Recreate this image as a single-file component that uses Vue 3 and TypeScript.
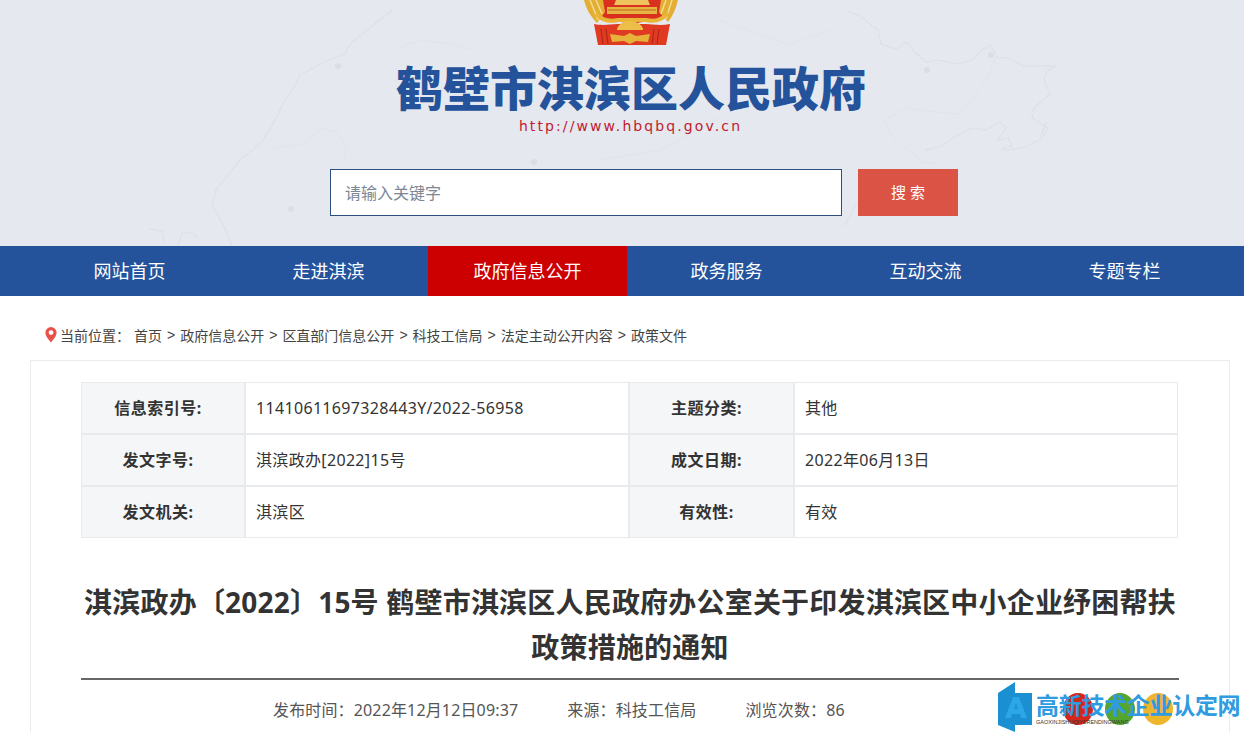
<script setup lang="ts">
const navItems = ['网站首页', '走进淇滨', '政府信息公开', '政务服务', '互动交流', '专题专栏']
const crumbs = ['首页', '政府信息公开', '区直部门信息公开', '科技工信局', '法定主动公开内容', '政策文件']
const infoRows = [
  ['信息索引号:', '11410611697328443Y/2022-56958', '主题分类:', '其他'],
  ['发文字号:', '淇滨政办[2022]15号', '成文日期:', '2022年06月13日'],
  ['发文机关:', '淇滨区', '有效性:', '有效'],
]
// faint province outline behind the header
const mapLines = [
  'M392 10L372 26L350 44L345 54L328 60L300 75L296 84L285 100L272 126L262 142L240 160L216 190L212 205L222 222L232 245',
  'M150 229L162 231L164 242M178 245L182 234L190 232L198 238',
  'M848 11L860 16L878 30L881 44L896 49L906 42L915 52L926 62L938 60L958 64L972 60L982 50L990 45L998 58L1010 58L1022 66L1040 66L1056 66L1046 72L1044 80L1050 94L1034 108L1032 118L1048 128L1044 136',
  'M926 150L942 146L956 136L972 128L986 130L1000 122L1006 128L998 140L1008 138L1012 146L1002 148L1004 150L1022 148L1040 140L1046 122',
  'M845 225L856 204L870 196',
]
const faintLines = [
  'M272 148L302 144L322 128L336 132L346 146L344 160',
  'M884 120L906 108L936 112L960 114L976 94L988 76L996 56',
  'M884 120L894 140L914 154L922 162L938 164',
  'M398 48L420 40L450 44L476 50',
  'M600 160L660 150L720 118',
  'M720 20L790 45L830 30',
]
</script>

<template>
  <div class="page">
    <header class="head">
      <svg class="map" viewBox="0 0 1244 246" width="1244" height="246" aria-hidden="true">
        <g fill="none" stroke="#dce0e8" stroke-width="1.300" stroke-linecap="round" stroke-linejoin="round" stroke-dasharray="8 2 3 2">
          <path v-for="(d, i) in mapLines" :key="i" :d="d" />
        </g>
        <g fill="none" stroke="#e1e4eb" stroke-width="1">
          <path v-for="(d, i) in faintLines" :key="i" :d="d" />
        </g>
        <g fill="#dbdee7">
          <circle cx="338" cy="66" r="3" />
          <circle cx="291" cy="209" r="3" />
          <circle cx="927" cy="70" r="3" />
          <circle cx="991" cy="55" r="3" />
          <circle cx="534" cy="162" r="3" />
        </g>
      </svg>
      <svg class="emblem" viewBox="0 0 120 47" width="120" height="47" aria-hidden="true">
        <path d="M30 0H94V18L62 24L30 18Z" fill="#d9301f" />
        <path d="M14 0H33L35 12L27 23C20 16 16 8 14 0Z" fill="#e3ae33" />
        <path d="M108 0H91L89 12L98 22C103 16 106 8 108 0Z" fill="#e3ae33" />
        <path d="M20 0L28 20M26 0L32 14M102 0L96 19M96 0L91 14" stroke="#f4dc8e" stroke-width="1.500" />
        <path d="M46 0H78L80 5H44Z" fill="#eec35c" />
        <path d="M37 7H87V14H37Z" fill="#e6b440" />
        <path d="M38 10H86" stroke="#bf6a24" stroke-width="1" />
        <path d="M26 14C32 20 40 22 48 20H76C84 22 92 20 98 13" fill="none" stroke="#e8b537" stroke-width="4" />
        <path d="M24 24L28 45H96L100 24C90 26 82 24 76 24H48C40 24 34 26 24 24Z" fill="#e03a22" />
        <path d="M31 29L33 44M36 29L38 44M84 29L82 44M89 29L87 44" stroke="#aa2415" stroke-width="1" />
        <path d="M47 30A13 9 0 0 1 73 30Z" fill="#eebf48" />
        <path d="M40 34L54 36L60 33L66 36L80 34L78 42L66 41L60 44L54 41L42 42Z" fill="#e6b23a" />
      </svg>
      <h1 class="site-name">鹤壁市淇滨区人民政府</h1>
      <div class="site-url">http://www.hbqbq.gov.cn</div>
      <form class="search" @submit.prevent>
        <input class="search-input" type="text" placeholder="请输入关键字" />
        <button class="search-btn" type="submit">搜 索</button>
      </form>
    </header>

    <nav class="nav">
      <a v-for="item in navItems" :key="item" class="nav-item" :class="{ active: item === '政府信息公开' }">{{ item }}</a>
    </nav>

    <div class="crumbs">
      <svg class="pin" viewBox="0 0 12 16" width="12" height="16" aria-hidden="true">
        <path fill-rule="evenodd" fill="#e8524a" d="M6 0a5.600 5.600 0 0 1 5.600 5.600C11.600 9.400 8 13 6 15.500 4 13 .4 9.400 .4 5.600A5.600 5.600 0 0 1 6 0zm0 3.200a2.400 2.400 0 1 0 0 4.800 2.400 2.400 0 0 0 0-4.800z" />
      </svg>
      <span class="crumb-label">当前位置：</span>
      <template v-for="(c, i) in crumbs" :key="c">
        <span v-if="i > 0" class="crumb-sep">&gt;</span>
        <a class="crumb">{{ c }}</a>
      </template>
    </div>

    <main class="card">
      <div class="info">
        <template v-for="row in infoRows" :key="row[0]">
          <div class="info-label">{{ row[0] }}</div>
          <div class="info-value">{{ row[1] }}</div>
          <div class="info-label">{{ row[2] }}</div>
          <div class="info-value">{{ row[3] }}</div>
        </template>
      </div>
      <h2 class="title">淇滨政办〔2022〕15号 鹤壁市淇滨区人民政府办公室关于印发淇滨区中小企业纾困帮扶政策措施的通知</h2>
      <div class="meta">
        <span>发布时间：2022年12月12日09:37</span>
        <span>来源：科技工信局</span>
        <span>浏览次数：86</span>
      </div>
    </main>

    <div class="mark" aria-hidden="true">
      <span class="dot dot-red"></span>
      <span class="dot dot-green"></span>
      <span class="dot dot-yellow"></span>
      <svg class="mark-logo" viewBox="0 0 34 50" width="34" height="50">
        <path d="M0 11L17 0v11h17v32H17v7L0 43z" fill="#1a8fd1" />
        <path d="M7 36L15 15h6l8 21h-6l-1-4h-8l-1 4zM16 27h4l-2-6z" fill="#2ba6e6" fill-rule="evenodd" />
      </svg>
      <div class="mark-text">
        <div class="mark-cn">高新技术企业认定网</div>
        <div class="mark-en">GAOXINJISHUQIYERENDINGWANG</div>
      </div>
    </div>
  </div>
</template>

<style scoped>
.page {
  position: relative;
  width: 1244px;
  height: 732px;
  overflow: hidden;
  background: #fff;
  font-family: "Noto Sans", "Noto Sans CJK SC", sans-serif;
  color: #333;
}

.head {
  position: relative;
  height: 246px;
  background: #e5e8ee;
  display: flex;
  flex-direction: column;
  align-items: center;
}

.map {
  position: absolute;
  left: 0;
  top: 0;
}

.emblem {
  position: relative;
  margin-left: 16px;
  display: block;
}

.site-name {
  position: relative;
  margin: 15px 0 0 18px;
  font-size: 47px;
  line-height: 52px;
  font-weight: 900;
  color: #24539b;
  white-space: nowrap;
}

.site-url {
  position: relative;
  margin: 4px 0 0 17px;
  font-family: "DejaVu Sans", sans-serif;
  font-size: 14px;
  line-height: 16px;
  letter-spacing: 2.1px;
  color: #c0202e;
}

.search {
  position: relative;
  display: flex;
  gap: 16px;
  margin-top: 35px;
  margin-left: 44px;
}

.search-input {
  box-sizing: border-box;
  width: 512px;
  height: 47px;
  padding: 0 14px;
  border: 1px solid #2c4f80;
  background: #fff;
  font: inherit;
  font-size: 16px;
  color: #333;
  outline: none;
}

.search-input::placeholder {
  color: #7b8794;
  opacity: 1;
}

.search-btn {
  width: 100px;
  height: 47px;
  padding: 0 0 2px;
  border: 0;
  background: #db5344;
  color: #fff;
  font: inherit;
  font-size: 15px;
}

.nav {
  display: flex;
  height: 50px;
  padding-left: 30px;
  background: #24539b;
}

.nav-item {
  width: 199px;
  line-height: 50px;
  text-align: center;
  font-size: 18px;
  color: #fff;
}

.nav-item.active {
  background: #cc0000;
}

.crumbs {
  display: flex;
  align-items: center;
  height: 64px;
  padding-left: 45px;
  padding-top: 14px;
  box-sizing: border-box;
  font-size: 14px;
  color: #444;
}

.pin {
  margin-right: 3px;
}

.crumb-label {
  margin-right: 2px;
  width: 72px;
}

.crumb-sep {
  margin: 0 5px;
  font-family: "Liberation Sans", sans-serif;
}

.card {
  box-sizing: border-box;
  width: 1200px;
  height: 420px;
  margin-left: 30px;
  padding: 21px 50px 0;
  border: 1px solid #e9ebee;
}

.info {
  display: grid;
  grid-template-columns: 162px 382px 163px 382px;
  grid-auto-rows: 50px;
  gap: 2px;
  width: 1095px;
  border: 1px solid #e8eaed;
  background: #e8eaed;
}

.info-label {
  box-sizing: border-box;
  padding-right: 10px;
  background: #f5f6f8;
  font-size: 16px;
  font-weight: 700;
  letter-spacing: 0.5px;
  line-height: 50px;
  text-align: center;
}

.info-value {
  background: #fff;
  font-size: 16px;
  letter-spacing: 0.33px;
  line-height: 50px;
  padding-left: 10px;
  white-space: nowrap;
}

.title {
  width: 1098px;
  margin: 42px 0 0;
  padding-bottom: 8px;
  border-bottom: 2px solid #666;
  font-size: 28px;
  line-height: 45px;
  font-weight: 700;
  letter-spacing: 0.2px;
  text-align: center;
}

.meta {
  display: flex;
  gap: 49px;
  width: 1098px;
  margin-top: 20px;
  padding-left: 192px;
  box-sizing: border-box;
  font-size: 16px;
  letter-spacing: 0.15px;
  line-height: 20px;
  color: #555;
}

.mark {
  position: absolute;
  left: 998px;
  top: 682px;
  width: 246px;
  height: 50px;
  padding-left: 38px;
  box-sizing: border-box;
}

.mark-logo {
  position: absolute;
  left: 0;
  top: 0;
}

.dot {
  position: absolute;
  top: 11px;
  width: 30px;
  height: 32px;
  border-radius: 50%;
}

.dot-red {
  left: 65px;
  background: #d4271b;
}

.dot-green {
  left: 107px;
  background: #55a630;
}

.dot-yellow {
  left: 145px;
  background: #eeb62a;
}

.mark-text {
  position: relative;
}

.mark-cn {
  font-size: 23px;
  line-height: 26px;
  margin-top: 10px;
  font-weight: 700;
  color: #2f9be0;
  white-space: nowrap;
  letter-spacing: -0.3px;
}

.mark-en {
  font-family: "Liberation Sans", sans-serif;
  font-size: 5.500px;
  line-height: 9px;
  color: #333;
  white-space: nowrap;
}
</style>
